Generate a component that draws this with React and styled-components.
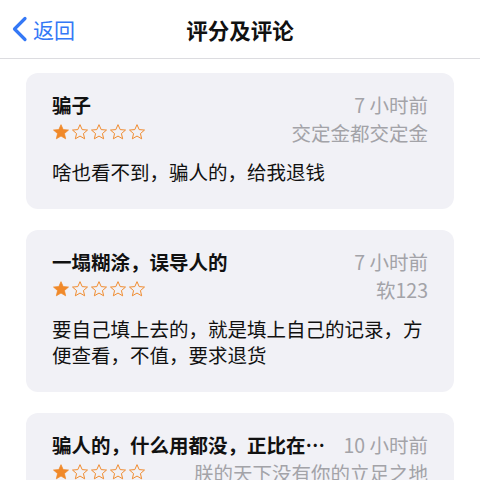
import React from 'react';
import styled, { createGlobalStyle } from 'styled-components';

const Global = createGlobalStyle`
  html, body {
    margin: 0;
    padding: 0;
    background: #fff;
    overflow: hidden;
  }
  body {
    font-family: "Noto Sans CJK SC", "Noto Sans", "Liberation Sans", sans-serif;
  }
`;

const Page = styled.div`
  width: 480px;
  height: 480px;
  overflow: hidden;
`;

const NavBar = styled.header`
  height: 59px;
  border-bottom: 1px solid #dcdce0;
  display: flex;
  align-items: center;
  position: relative;
  box-sizing: border-box;
`;

const Back = styled.div`
  display: flex;
  align-items: center;
  gap: 5px;
  padding-left: 11px;
  color: #3478f6;
  font-size: 21px;
`;

const NavTitle = styled.div`
  position: absolute;
  left: 0;
  right: 0;
  text-align: center;
  font-size: 21.5px;
  font-weight: 600;
  color: #111;
  pointer-events: none;
`;

const List = styled.main`
  display: flex;
  flex-direction: column;
  gap: 21px;
  padding: 14px 26px 0;
`;

const Card = styled.section`
  background: #f1f1f6;
  border-radius: 12px;
  padding: 19px 26px 24px;
`;

const Row = styled.div`
  display: flex;
  justify-content: space-between;
  align-items: center;
  gap: 12px;
  height: 24px;
  margin-bottom: ${({ $mb }) => $mb || 0}px;
`;

const Title = styled.div`
  font-size: 19.5px;
  font-weight: 600;
  color: #111;
  white-space: nowrap;
  overflow: hidden;
  text-overflow: ellipsis;
  min-width: 0;
`;

const Meta = styled.div`
  font-size: 19.5px;
  color: #a3a3a8;
  white-space: nowrap;
  flex-shrink: 0;
`;

const Stars = styled.div`
  display: flex;
  gap: 1px;
`;

const Body = styled.p`
  margin: 0;
  font-size: 19.5px;
  line-height: 26px;
  color: #111;
`;

const STAR = 'M12 2.2l2.9 6.6 7.1.6-5.4 4.7 1.6 7-6.2-3.7-6.2 3.7 1.6-7L2 9.4l7.1-.6z';

const Star = ({ filled }) => (
  <svg width="18" height="18" viewBox="0 0 24 24">
    <path
      d={STAR}
      fill={filled ? '#f0892a' : 'none'}
      stroke="#f0892a"
      strokeWidth={filled ? 1 : 1.3}
      strokeLinejoin="round"
    />
  </svg>
);

const reviews = [
  { title: '骗子', time: '7 小时前', author: '交定金都交定金', rating: 1, text: '啥也看不到，骗人的，给我退钱' },
  { title: '一塌糊涂，误导人的', time: '7 小时前', author: '软123', rating: 1, text: '要自己填上去的，就是填上自己的记录，方便查看，不值，要求退货' },
  { title: '骗人的，什么用都没，正比在朕的天下没有你的立足之地', time: '10 小时前', author: '朕的天下没有你的立足之地', rating: 1, text: '什么用都没有' },
];

export default function App() {
  return (
    <Page>
      <Global />
      <NavBar>
        <Back>
          <svg width="17" height="26" viewBox="0 0 17 26">
            <path d="M14 2.5L3.5 13 14 23.5" fill="none" stroke="#3478f6" strokeWidth="3.2" strokeLinecap="round" strokeLinejoin="round" />
          </svg>
          <span>返回</span>
        </Back>
        <NavTitle>评分及评论</NavTitle>
      </NavBar>
      <List>
        {reviews.map((r, i) => (
          <Card key={i}>
            <Row $mb={4}>
              <Title>{r.title}</Title>
              <Meta>{r.time}</Meta>
            </Row>
            <Row $mb={15}>
              <Stars>
                {[1, 2, 3, 4, 5].map((n) => <Star key={n} filled={n <= r.rating} />)}
              </Stars>
              <Meta>{r.author}</Meta>
            </Row>
            <Body>{r.text}</Body>
          </Card>
        ))}
      </List>
    </Page>
  );
}
